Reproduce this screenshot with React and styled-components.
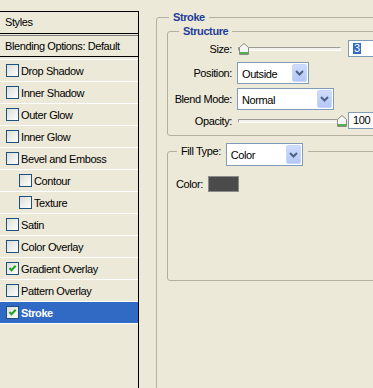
import React from 'react'
import styled, { createGlobalStyle } from 'styled-components'

const GlobalStyle = createGlobalStyle`
  html, body {
    margin: 0;
    padding: 0;
    background: #ece9d8;
  }
  body {
    width: 373px;
    height: 388px;
    overflow: hidden;
    font-family: "Liberation Sans", Arial, sans-serif;
    font-size: 11px;
    letter-spacing: -0.4px;
    color: #000;
  }
`

const Dialog = styled.div`
  display: flex;
  align-items: flex-start;
  height: 388px;
  overflow: hidden;
`

// ---- left: styles list ----
const StylesPanel = styled.div`
  flex: 0 0 138px;
  width: 138px;
  height: 377px;
  margin-top: 11px;
  border-top: 1px solid #000;
  border-right: 1px solid #000;
`

const PanelHeader = styled.div`
  height: 21px;
  line-height: 21px;
  padding-left: 5px;
  border-bottom: 1px solid #000;
`

const BlendingRow = styled.div`
  margin-top: 1px;
  height: 20px;
  line-height: 20px;
  padding-left: 5px;
  border-top: 1px solid #7d7d7d;
  border-bottom: 1px solid #000;
`

const StyleList = styled.ul`
  list-style: none;
  margin: 2px 0 0;
  padding: 0;
  border-top: 1px solid #fff;
`

const StyleItem = styled.li`
  display: flex;
  align-items: center;
  gap: 2px;
  height: 21px;
  padding-left: ${p => (p.$indent ? 19 : 6)}px;
  border-bottom: 1px solid #fff;
  background: ${p => (p.$active ? '#316ac5' : 'transparent')};
  color: ${p => (p.$active ? '#fff' : '#000')};
  font-weight: ${p => (p.$active ? 'bold' : 'normal')};
`

const BoxSvg = styled.svg`
  flex: none;
  display: block;
`

const CheckBox = ({ checked }) => (
  <BoxSvg width="13" height="13" viewBox="0 0 13 13">
    <defs>
      <linearGradient id="cbFill" x1="0" y1="0" x2="1" y2="1">
        <stop offset="0" stopColor="#dcdcd5" />
        <stop offset="1" stopColor="#ffffff" />
      </linearGradient>
    </defs>
    <rect x="0.5" y="0.5" width="12" height="12" fill="url(#cbFill)" stroke="#1c5180" />
    {checked && (
      <path d="M3.5 6 L5.5 8.3 L9.7 3.8" fill="none" stroke="#21a121" strokeWidth="2" />
    )}
  </BoxSvg>
)

// ---- right: settings ----
const SettingsPane = styled.div`
  flex: 1;
  min-width: 0;
  height: 388px;
  overflow: hidden;
  padding-left: 17px;
`

const Group = styled.fieldset`
  box-sizing: border-box;
  width: ${p => p.$w}px;
  height: ${p => (p.$h ? `${p.$h}px` : 'auto')};
  margin: ${p => p.$mt || 0}px 0 0 ${p => p.$ml || 0}px;
  padding: 0;
  min-width: 0;
  border: 1px solid #b3b09f;
  border-radius: 3px;
`

const Caption = styled.legend`
  margin-left: ${p => p.$offset}px;
  padding: 0 4px;
  line-height: 13px;
  font-weight: bold;
  color: #1f3d9a;
`

const FillCaption = styled.legend`
  display: flex;
  align-items: flex-start;
  gap: 5px;
  margin-left: 9px;
  padding: 0 5px 0 4px;
`

const FillLabel = styled.span`
  margin-top: 2px;
  line-height: 13px;
`

// the select hangs below the legend line, so it doesn't push the border down
const CaptionSelect = styled.div`
  margin-bottom: -7px;
`

const StructureBody = styled.div`
  padding: 2px 0 6px 1px;
`

const FieldRow = styled.div`
  display: flex;
  align-items: center;
  height: ${p => p.$h}px;
  margin-top: ${p => p.$mt || 0}px;
`

const FieldLabel = styled.label`
  flex: none;
  width: 63px;
  margin-right: 5px;
  text-align: right;
`

const Slider = styled.div`
  position: relative;
  flex: none;
  width: 110px;
  height: 17px;
`

const Track = styled.div`
  margin: 7px 6px 0 1px;
  height: 2px;
  border: 1px solid;
  border-color: #9d9c99 #fff #fff #9d9c99;
  background: #f3f2ec;
`

const Thumb = styled.svg`
  position: absolute;
  top: 3px;
  left: ${p => 1 + p.$pct * 99}px;
`

const NumberBox = styled.div`
  flex: none;
  box-sizing: border-box;
  width: 40px;
  height: 17px;
  margin-left: 1px;
  padding-left: 4px;
  border: 1px solid #7f9db9;
  background: #fff;
  line-height: 15px;
`

const Selected = styled.span`
  display: inline-block;
  padding: 0 1px;
  line-height: 11px;
  background: #316ac5;
  color: #fff;
`

const SelectBox = styled.div`
  flex: none;
  box-sizing: border-box;
  display: flex;
  width: ${p => p.$w}px;
  height: ${p => p.$h || 22}px;
  padding: 1px;
  border: 1px solid #7f9db9;
  background: #fff;
`

const SelectValue = styled.span`
  flex: 1;
  padding-left: 3px;
  line-height: ${p => (p.$h || 22) - 2}px;
`

const DropButton = styled.span`
  display: flex;
  align-items: center;
  justify-content: center;
  width: 15px;
  box-sizing: border-box;
  border: 1px solid #c7d6fb;
  border-radius: 2px;
  background: linear-gradient(#cfdcfd, #b3c8f5);
`

const FillBody = styled.div`
  box-sizing: border-box;
  height: 121px;
  padding: 17px 0 0 8px;
`

const ColorRow = styled.div`
  display: flex;
  align-items: center;
  gap: 5px;
`

const Swatch = styled.span`
  box-sizing: border-box;
  width: 31px;
  height: 16px;
  border: 1px solid #8c8c88;
  background: ${p => p.$color};
`

const Chevron = () => (
  <svg width="9" height="6" viewBox="0 0 9 6">
    <polyline points="1,1 4.5,4.5 8,1" fill="none" stroke="#4d6185" strokeWidth="2" />
  </svg>
)

const Select = ({ value, width, height }) => (
  <SelectBox $w={width} $h={height}>
    <SelectValue $h={height}>{value}</SelectValue>
    <DropButton>
      <Chevron />
    </DropButton>
  </SelectBox>
)

const SliderField = ({ pct, children }) => (
  <>
    <Slider>
      <Track />
      <Thumb $pct={pct} width="10" height="12" viewBox="0 0 10 12">
        <path d="M0.5 11.5 V4.5 L5 0.5 L9.5 4.5 V11.5 Z" fill="#f6f6f2" stroke="#8b8b82" />
        <rect x="1" y="9" width="8" height="2" fill="#4fb04f" />
      </Thumb>
    </Slider>
    <NumberBox>{children}</NumberBox>
  </>
)

const effects = [
  { name: 'Drop Shadow' },
  { name: 'Inner Shadow' },
  { name: 'Outer Glow' },
  { name: 'Inner Glow' },
  { name: 'Bevel and Emboss' },
  { name: 'Contour', indent: true },
  { name: 'Texture', indent: true },
  { name: 'Satin' },
  { name: 'Color Overlay' },
  { name: 'Gradient Overlay', checked: true },
  { name: 'Pattern Overlay' },
  { name: 'Stroke', checked: true, active: true },
]

export default function App() {
  return (
    <>
      <GlobalStyle />
      <Dialog>
        <StylesPanel>
          <PanelHeader>Styles</PanelHeader>
          <BlendingRow>Blending Options: Default</BlendingRow>
          <StyleList>
            {effects.map(e => (
              <StyleItem key={e.name} $indent={e.indent} $active={e.active}>
                <CheckBox checked={e.checked} />
                {e.name}
              </StyleItem>
            ))}
          </StyleList>
        </StylesPanel>

        <SettingsPane>
          <Group $w={400} $h={420} $mt={11}>
            <Caption $offset={12}>Stroke</Caption>

            <Group $w={380} $mt={1} $ml={10}>
              <Caption $offset={11}>Structure</Caption>
              <StructureBody>
                <FieldRow $h={17}>
                  <FieldLabel>Size:</FieldLabel>
                  <SliderField pct={0.008}>
                    <Selected>3</Selected>
                  </SliderField>
                </FieldRow>
                <FieldRow $h={22} $mt={5}>
                  <FieldLabel>Position:</FieldLabel>
                  <Select value="Outside" width={72} />
                </FieldRow>
                <FieldRow $h={22} $mt={4}>
                  <FieldLabel>Blend Mode:</FieldLabel>
                  <Select value="Normal" width={97} />
                </FieldRow>
                <FieldRow $h={17} $mt={2}>
                  <FieldLabel>Opacity:</FieldLabel>
                  <SliderField pct={1}>100</SliderField>
                </FieldRow>
              </StructureBody>
            </Group>

            <Group $w={380} $mt={7} $ml={10}>
              <FillCaption>
                <FillLabel>Fill Type:</FillLabel>
                <CaptionSelect>
                  <Select value="Color" width={77} height={23} />
                </CaptionSelect>
              </FillCaption>
              <FillBody>
                <ColorRow>
                  <span>Color:</span>
                  <Swatch $color="#4b4b4b" />
                </ColorRow>
              </FillBody>
            </Group>
          </Group>
        </SettingsPane>
      </Dialog>
    </>
  )
}
